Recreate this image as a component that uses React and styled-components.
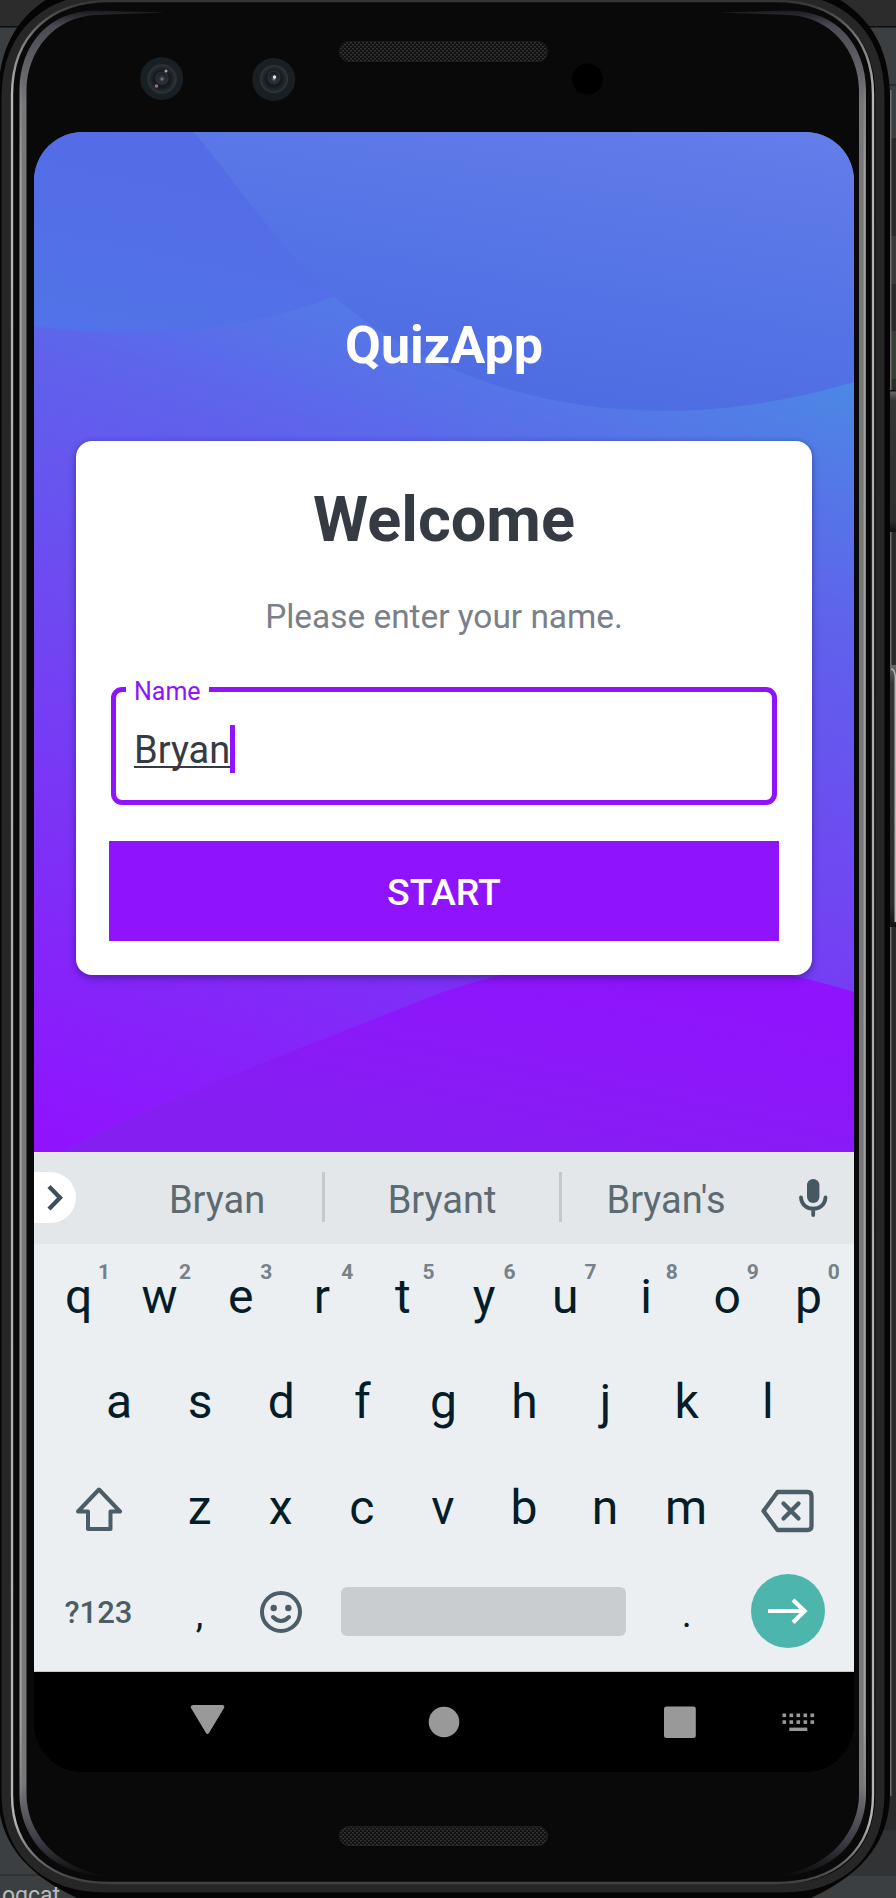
import React from 'react';
import styled, { createGlobalStyle } from 'styled-components';

const GlobalStyle = createGlobalStyle`
  *, *::before, *::after { box-sizing: border-box; }
  html, body { margin: 0; padding: 0; }
  body { background: #3c3f41; overflow: hidden; font-family: Roboto, "Liberation Sans", sans-serif; }
`;

const Desktop = styled.main`
  position: relative;
  width: 896px;
  height: 1898px;
  overflow: hidden;
  background: #3c3f41;
`;

const Backdrop = styled.svg`
  position: absolute;
  inset: 0;
  display: block;
`;

const LogcatTab = styled.span`
  position: absolute;
  z-index: 1;
  left: 2px;
  top: 1883px;
  font: 23px/26px Roboto, sans-serif;
  color: #bbbbbb;
`;

const Phone = styled.section`
  position: relative;
  width: 888px;
  height: 1898px;
  display: flex;
  flex-direction: column;
  align-items: center;
`;

const Forehead = styled.header`
  height: 132px;
  width: 820px;
  flex: none;
`;

const Chin = styled.footer`
  height: 126px;
  flex: none;
`;

const Screen = styled.div`
  width: 820px;
  height: 1640px;
  flex: none;
  border-radius: 49px;
  overflow: hidden;
  display: flex;
  flex-direction: column;
  background: #000;
`;

const AppArea = styled.div`
  position: relative;
  height: 1020px;
  flex: none;
  display: flex;
  flex-direction: column;
  align-items: center;
  padding-top: 182px;
`;

const AppTitle = styled.h1`
  position: relative;
  margin: 0 0 63.5px;
  font-size: 52px;
  line-height: 63px;
  font-weight: 700;
  color: #fff;
`;

const Card = styled.form`
  position: relative;
  width: 736px;
  height: 534px;
  padding: 41px 33px 34px;
  border-radius: 16px;
  background: #fff;
  box-shadow: 0 4px 9px rgba(20, 10, 80, 0.3), 0 0 5px rgba(20, 10, 80, 0.18);
  display: flex;
  flex-direction: column;
`;

const Heading = styled.h2`
  margin: 0;
  font-size: 63px;
  line-height: 76px;
  font-weight: 700;
  text-align: center;
  color: #363a43;
`;

const Hint = styled.p`
  margin: 39px 0 38px;
  font-size: 33.4px;
  line-height: 39px;
  text-align: center;
  color: #7a8089;
`;

const Field = styled.fieldset`
  min-width: 0;
  height: 131px;
  margin: 0 2px;
  padding: 0 0 0 18px;
  border: 5px solid #8f13fd;
  border-radius: 11px;
  display: block;
`;

const FieldLabel = styled.legend`
  margin-left: -8px;
  padding: 4px 8px 0 8px;
  font-size: 25px;
  line-height: 28px;
  color: #8f13fd;
`;

const FieldValue = styled.div`
  display: flex;
  align-items: center;
  height: 50px;
  margin-top: 18px;
`;

const Typed = styled.span`
  font-size: 38px;
  line-height: 44px;
  padding-top: 3px;
  color: #363a43;
  text-decoration: underline;
  text-decoration-thickness: 1.5px;
  text-underline-offset: 3px;
  text-decoration-skip-ink: none;
`;

const Caret = styled.span`
  width: 4.5px;
  height: 48px;
  background: #8f13fd;
`;

const StartButton = styled.button`
  height: 100px;
  margin-top: auto;
  border: 0;
  padding: 3px 0 0;
  background: #8f13fd;
  color: #fff;
  font: 500 37.5px/44px Roboto, sans-serif;
`;

const Suggestions = styled.div`
  height: 92px;
  flex: none;
  display: flex;
  align-items: center;
  background: #e3e7ea;
`;

const ExpandTab = styled.button`
  width: 42px;
  height: 51px;
  margin-top: -1px;
  margin-right: 36px;
  border: 0;
  padding: 0;
  border-radius: 0 26px 26px 0;
  background: #fff;
  display: flex;
`;

const Suggestion = styled.span`
  width: ${(p) => p.$width}px;
  text-align: center;
  font-size: 38px;
  line-height: 44px;
  padding-top: 3px;
  color: #5c6a71;
`;

const Divider = styled.span`
  width: 3px;
  height: 50px;
  margin-top: -2px;
  background: #c3c9cc;
`;

const Mic = styled.svg`
  margin-left: auto;
  margin-right: 26px;
  margin-top: -1px;
`;

const Keyboard = styled.div`
  height: 428px;
  flex: none;
  background: #ebeff2;
  border-bottom: 1px solid #c5c9cb;
  display: flex;
  flex-direction: column;
`;

const KeyRow = styled.div`
  display: flex;
  height: 106px;
  padding: 0 ${(p) => p.$inset || 4}px;
`;

const Key = styled.span`
  position: relative;
  width: ${(p) => p.$width || 81.1}px;
  height: 100%;
  display: flex;
  justify-content: center;
  align-items: center;
  color: ${(p) => (p.$muted ? '#4b5e67' : '#041d28')};
  font-size: ${(p) => p.$size || 48}px;
  font-weight: ${(p) => (p.$muted ? 500 : 400)};
  line-height: 56px;
  padding-bottom: ${(p) => p.$lift || 0}px;
`;

const AltDigit = styled.sup`
  position: absolute;
  top: 15px;
  left: 60px;
  font-size: 21px;
  line-height: 26px;
  font-weight: 700;
  color: #74828a;
`;

const SpaceBar = styled.span`
  width: 285px;
  height: 49px;
  margin: 25px 20.5px 0 19.5px;
  border-radius: 6px;
  background: #c9cdd0;
`;

const EnterKey = styled.span`
  width: 74px;
  height: 74px;
  margin: 12px 0 0 24px;
  border-radius: 50%;
  background: #4db6ac;
  display: flex;
`;

const NavBar = styled.nav`
  height: 100px;
  flex: none;
  background: #000;
`;

const DeviceArt = () => (
  <Backdrop width="896" height="1898" viewBox="0 0 896 1898" fill="none">
    <defs>
      <pattern id="mesh" width="4" height="4" patternUnits="userSpaceOnUse">
        <rect width="4" height="4" fill="#111" />
        <rect x="0" y="0" width="2" height="1.4" fill="#333" />
        <rect x="2" y="2" width="2" height="1.4" fill="#333" />
      </pattern>
      <linearGradient id="outerEdge" x1="0" y1="0" x2="0" y2="1898" gradientUnits="userSpaceOnUse">
        <stop offset="0" stopColor="#333" />
        <stop offset=".02" stopColor="#777" />
        <stop offset=".05" stopColor="#b5b5b5" />
        <stop offset=".5" stopColor="#aaa" />
        <stop offset=".96" stopColor="#b5b5b5" />
        <stop offset=".985" stopColor="#555" />
        <stop offset="1" stopColor="#2b2b2b" />
      </linearGradient>
      <linearGradient id="innerEdge" x1="0" y1="11" x2="0" y2="1878" gradientUnits="userSpaceOnUse">
        <stop offset="0" stopColor="#1c1c22" />
        <stop offset=".008" stopColor="#4a4a52" />
        <stop offset=".05" stopColor="#77777a" />
        <stop offset=".5" stopColor="#77777a" />
        <stop offset=".95" stopColor="#77777a" />
        <stop offset=".98" stopColor="#3c3c44" />
        <stop offset="1" stopColor="#090909" />
      </linearGradient>
      <linearGradient id="glint" x1="0" y1="70" x2="0" y2="1810" gradientUnits="userSpaceOnUse">
        <stop offset="0" stopColor="#a2a2a2" stopOpacity="0" />
        <stop offset=".06" stopColor="#a2a2a2" />
        <stop offset=".95" stopColor="#a2a2a2" />
        <stop offset="1" stopColor="#a2a2a2" stopOpacity="0" />
      </linearGradient>
      <linearGradient id="buttonFace" x1="0" y1="0" x2="0" y2="1">
        <stop offset="0" stopColor="#6a6a6a" />
        <stop offset=".07" stopColor="#353535" />
        <stop offset=".92" stopColor="#2e2e2e" />
        <stop offset="1" stopColor="#111" />
      </linearGradient>
      <radialGradient id="lens">
        <stop offset="0" stopColor="#8795a8" />
        <stop offset=".15" stopColor="#32343f" />
        <stop offset=".5" stopColor="#15171a" />
        <stop offset=".8" stopColor="#22272a" />
        <stop offset="1" stopColor="#34373a" />
      </radialGradient>
    </defs>
    <rect width="896" height="27" fill="#2c2c2c" />
    <rect y="26" width="896" height="1.5" fill="#0d0d0d" />
    <rect y="1874" width="120" height="2" fill="#2f3133" />
    <rect x="884" y="84" width="12" height="2" fill="#2c2c2c" />
    <rect x="884" y="138" width="12" height="98" fill="#2b2b2b" />
    <rect x="884" y="236" width="12" height="48" fill="#3a3a3a" />
    <rect x="884" y="284" width="12" height="1546" fill="#2b2b2b" />
    <rect x="884" y="331" width="12" height="48" fill="#344134" />
    <rect x="820" y="1830" width="76" height="46" fill="#313335" />
    <rect x="890" y="90" width="1.5" height="1706" fill="#707070" />
    <path d="M-2 100 C-2 50 15 18 52 -4 H834 C872 18 890 50 890 100 V1792 C890 1840 865 1875 802 1902 H86 C23 1875 -2 1840 -2 1792 Z" fill="#050505" />
    <path d="M110 -2 C50 -2 6 30 6 98 V1792 C6 1852 45 1888 106 1888 H782 C843 1888 880 1852 880 1792 V98 C880 30 838 -2 778 -2 Z" fill="#090909" stroke="#262626" strokeWidth="9" />
    <path d="M110 1 C52 1 12 34 12 95 V1795 C12 1850 50 1883 110 1883 H776 C836 1883 873 1850 873 1795 V95 C873 34 834 1 776 1 Z" fill="#090909" stroke="url(#outerEdge)" strokeWidth="2.4" />
    <path d="M165 12.500 L95 10.500 C48 11 20 45 19.500 90 V1795 C20 1832 45 1874 105 1876 C52 1866 27 1830 26.500 1795 V90 C27 50 55 17 95 15 Z" fill="url(#innerEdge)" />
    <path d="M720 12.500 L790 10.500 C837 11 865.500 45 866 90 V1795 C865.500 1832 840 1874 780 1876 C833 1866 858.500 1830 859 1795 V90 C858.500 50 830 17 790 15 Z" fill="url(#innerEdge)" />
    <path d="M20.700 70 V1810 M864.500 70 V1810" stroke="url(#glint)" strokeWidth="1.800" />
    <rect x="339.500" y="41.500" width="208" height="20" rx="9.500" fill="url(#mesh)" stroke="#1c1c1c" />
    <rect x="339.500" y="1826.500" width="208" height="19" rx="9.500" fill="url(#mesh)" stroke="#222" />
    <circle cx="161.700" cy="78.500" r="21.500" fill="#182026" />
    <circle cx="162" cy="79" r="14.500" fill="url(#lens)" stroke="#2a2e31" />
    <circle cx="162" cy="78" r="6" stroke="#30333c" strokeWidth="1.200" />
    <circle cx="166" cy="71" r="1.500" fill="#aa9ca5" />
    <circle cx="156.500" cy="86" r="1.800" fill="#8d777f" />
    <circle cx="273.700" cy="79.500" r="21.500" fill="#182026" />
    <circle cx="274" cy="79" r="14" fill="url(#lens)" />
    <circle cx="274" cy="77" r="6" stroke="#2f3339" strokeWidth="1.200" />
    <circle cx="274.500" cy="77" r="1.700" fill="#dce6ef" />
    <circle cx="587.500" cy="79" r="15.500" fill="#000" />
    <rect x="890" y="391" width="6" height="141" fill="url(#buttonFace)" />
    <rect x="890" y="390" width="6" height="1.500" fill="#111" />
    <rect x="890" y="665" width="6" height="262" fill="url(#buttonFace)" />
    <path d="M891 669 Q894.500 669 895.300 676 V922" stroke="#b5b5b5" strokeWidth="1.600" />
  </Backdrop>
);

const Wallpaper = () => (
  <Backdrop width="820" height="1020" viewBox="34 132 820 1020">
    <defs>
      <linearGradient id="base" x1="854" y1="360" x2="528" y2="1306" gradientUnits="userSpaceOnUse">
        <stop offset="0" stopColor="#4a8ce3" />
        <stop offset=".27" stopColor="#6060ec" />
        <stop offset="1" stopColor="#9013fe" />
      </linearGradient>
      <linearGradient id="blobLeft" x1="300" y1="132" x2="250" y2="360" gradientUnits="userSpaceOnUse">
        <stop offset="0" stopColor="#556be6" />
        <stop offset="1" stopColor="#5172e8" />
      </linearGradient>
      <linearGradient id="blobRight" x1="640" y1="110" x2="590" y2="400" gradientUnits="userSpaceOnUse">
        <stop offset="0" stopColor="#637de9" />
        <stop offset=".7" stopColor="#5272e5" />
        <stop offset="1" stopColor="#4e6de2" />
      </linearGradient>
      <linearGradient id="wave" x1="640" y1="970" x2="590" y2="1200" gradientUnits="userSpaceOnUse">
        <stop offset="0" stopColor="#9013fe" />
        <stop offset="1" stopColor="#851ff1" />
      </linearGradient>
    </defs>
    <rect x="34" y="132" width="820" height="1020" fill="url(#base)" />
    <path d="M34 326 C140 340 240 332 334 297 L194 132 H34 Z" fill="url(#blobLeft)" />
    <path d="M194 132 C250 200 280 250 334 297 C470 410 660 440 854 382 V132 Z" fill="url(#blobRight)" />
    <path d="M60 1152 C180 1092 310 1045 440 993 C580 944 720 950 854 992 V1152 Z" fill="url(#wave)" />
  </Backdrop>
);

const NavIcons = () => (
  <svg width="820" height="100" viewBox="34 1672 820 100" fill="#999">
    <path d="M193 1705 H222.500 Q225 1705.500 224 1708 L209 1733 Q207.500 1735 206 1733 L191 1708 Q190 1705.500 193 1705Z" />
    <circle cx="444" cy="1722" r="15.300" />
    <rect x="664" y="1706.500" width="31.800" height="31.500" rx="2.500" />
    {[0, 1, 2, 3, 4].map((i) => (
      <g key={i}>
        <rect x={782.5 + i * 7} y="1713.500" width="3.600" height="3.600" />
        <rect x={782.5 + i * 7} y="1720.300" width="3.600" height="3.600" />
      </g>
    ))}
    <rect x="789.300" y="1727.600" width="18" height="3.400" />
  </svg>
);

const DIGITS = '1234567890';

export default function App() {
  return (
    <>
      <GlobalStyle />
      <Desktop>
        <DeviceArt />
        <LogcatTab>ogcat</LogcatTab>
        <Phone>
          <Forehead />
          <Screen>
            <AppArea>
              <Wallpaper />
              <AppTitle>QuizApp</AppTitle>
              <Card>
                <Heading>Welcome</Heading>
                <Hint>Please enter your name.</Hint>
                <Field>
                  <FieldLabel>Name</FieldLabel>
                  <FieldValue>
                    <Typed>Bryan</Typed>
                    <Caret />
                  </FieldValue>
                </Field>
                <StartButton type="button">START</StartButton>
              </Card>
            </AppArea>
            <Suggestions>
              <ExpandTab type="button" aria-label="Expand">
                <svg width="42" height="51" fill="none" stroke="#3d505a" strokeWidth="4.300">
                  <path d="M15 14.500 L26 25.700 L15 37" />
                </svg>
              </ExpandTab>
              <Suggestion $width={210}>Bryan</Suggestion>
              <Divider />
              <Suggestion $width={234}>Bryant</Suggestion>
              <Divider />
              <Suggestion $width={208}>Bryan's</Suggestion>
              <Mic width="30" height="40" viewBox="0 0 30 40" fill="none" stroke="#465963">
                <rect x="9" y="1" width="12.400" height="24" rx="6.200" fill="#465963" stroke="none" />
                <path d="M3 19.500 C4 34.500 26.500 34.500 27.500 19.500 M15.200 31 V37" strokeWidth="3.800" strokeLinecap="round" />
              </Mic>
            </Suggestions>
            <Keyboard>
              <KeyRow>
                {[...'qwertyuiop'].map((c, i) => (
                  <Key key={c}>
                    {c}
                    <AltDigit>{DIGITS[i]}</AltDigit>
                  </Key>
                ))}
              </KeyRow>
              <KeyRow $inset={44.5}>
                {[...'asdfghjkl'].map((c) => (
                  <Key key={c} $lift={2}>{c}</Key>
                ))}
              </KeyRow>
              <KeyRow>
                <Key $width={121}>
                  <svg width="50" height="50" fill="none" stroke="#4b5e67" strokeWidth="4" strokeLinejoin="round">
                    <path d="M25 5.500 L46 27.500 H36.500 V45 H14 V27.500 H4 Z" />
                  </svg>
                </Key>
                {[...'zxcvbnm'].map((c) => (
                  <Key key={c} $lift={2}>{c}</Key>
                ))}
                <Key $width={121}>
                  <svg width="58" height="50" fill="none" stroke="#4b5e67" strokeWidth="4.300" strokeLinejoin="round">
                    <path d="M19.500 8 H49.500 Q53.500 8 53.500 12 V42 Q53.500 46 49.500 46 H19.500 L5.500 27 Z" />
                    <path d="M25.500 19.500 L40.500 34.500 M40.500 19.500 L25.500 34.500" strokeLinecap="round" />
                  </svg>
                </Key>
              </KeyRow>
              <KeyRow>
                <Key $width={121} $muted $size={31} $lift={5}>?123</Key>
                <Key $size={38} $lift={2}>,</Key>
                <Key $lift={6}>
                  <svg width="46" height="46" fill="none" stroke="#4b5e67" strokeWidth="4">
                    <circle cx="23" cy="23" r="19" />
                    <path d="M15 28 Q23 36 31 28" strokeLinecap="round" />
                    <circle cx="15.700" cy="19" r="3.200" fill="#4b5e67" stroke="none" />
                    <circle cx="30.300" cy="19" r="3.200" fill="#4b5e67" stroke="none" />
                  </svg>
                </Key>
                <SpaceBar />
                <Key $size={38} $lift={2}>.</Key>
                <EnterKey>
                  <svg width="74" height="74" fill="none" stroke="#fff" strokeWidth="4.200">
                    <path d="M17 37 H54 M42 26 L53.500 37 L42 48.500" />
                  </svg>
                </EnterKey>
              </KeyRow>
            </Keyboard>
            <NavBar>
              <NavIcons />
            </NavBar>
          </Screen>
          <Chin />
        </Phone>
      </Desktop>
    </>
  );
}
